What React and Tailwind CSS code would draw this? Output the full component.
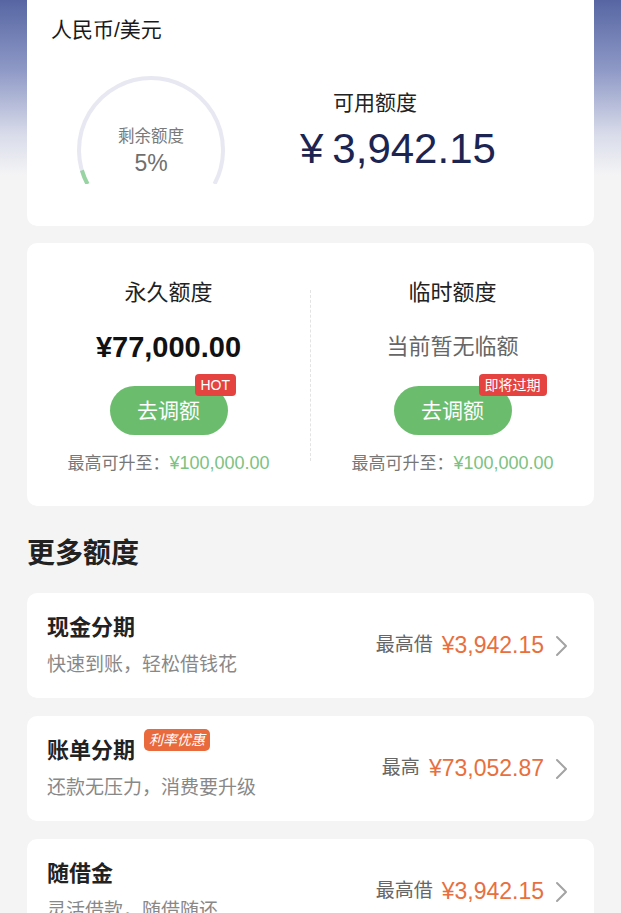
const font = { fontFamily: '"Liberation Sans", "Noto Sans CJK SC", sans-serif' };

function Gauge() {
  const arc = "M 16.5 109 A 72 72 0 1 1 143.5 109";
  return (
    <div className="relative w-[160px] h-[109px] shrink-0">
      <svg width="160" height="109" viewBox="0 0 160 109">
        <path d={arc} fill="none" stroke="#e7e8f1" strokeWidth="4" />
        <path d={arc} fill="none" stroke="#97d4a2" strokeWidth="4" pathLength="100" strokeDasharray="5 100" />
      </svg>
      <div className="absolute inset-0 flex flex-col items-center pt-[50px]">
        <span className="text-[16.5px] leading-[22px] text-[#7a7a7a]">剩余额度</span>
        <span className="text-[23px] leading-[28px] text-[#6f6f6f] mt-[2px]">5%</span>
      </div>
    </div>
  );
}

function Chevron() {
  return (
    <svg width="13" height="22" viewBox="0 0 13 22" className="ml-[11px]">
      <path d="M2 2 L11 11 L2 20" fill="none" stroke="#a3a3a3" strokeWidth="2" strokeLinecap="round" strokeLinejoin="round" />
    </svg>
  );
}

function LimitCol({ title, value, muted, badge }) {
  return (
    <div className="flex-1 flex flex-col items-center">
      <p className="text-[22px] leading-[26px] text-[#222]">{title}</p>
      {muted ? (
        <p className="mt-[24px] text-[22px] leading-[34px] text-[#666]">{value}</p>
      ) : (
        <p className="mt-[24px] text-[29px] leading-[34px] font-semibold text-[#111]">{value}</p>
      )}
      <div className="relative mt-[22px]">
        <button className="w-[118px] h-[49px] rounded-full bg-[#6bbd6d] text-white text-[21px]">去调额</button>
        <span className="absolute -top-[12px] left-[85px] h-[22px] px-[6px] rounded-[4px] bg-[#e5433f] text-white text-[14px] leading-[22px] whitespace-nowrap">
          {badge}
        </span>
      </div>
      <p className="mt-[17px] text-[17px] leading-[22px] text-[#777] whitespace-nowrap">
        最高可升至：<span className="text-[18px] text-[#7cc281]">¥100,000.00</span>
      </p>
    </div>
  );
}

function ProductCard({ title, desc, label, amount, tag }) {
  return (
    <div className="flex items-center justify-between h-[105px] rounded-[10px] bg-white pl-[20px] pr-[26px]">
      <div className="flex flex-col">
        <div className="flex items-start">
          <p className="text-[22px] leading-[26px] font-semibold text-[#222]">{title}</p>
          {tag && (
            <span className="ml-[9px] -mt-[9px] h-[22px] px-[5px] rounded-[5px] bg-[#e96a3c] text-white text-[14px] leading-[22px] italic">
              {tag}
            </span>
          )}
        </div>
        <p className="mt-[12px] text-[19px] leading-[24px] text-[#888]">{desc}</p>
      </div>
      <div className="flex items-center">
        <span className="text-[19px] text-[#666]">{label}</span>
        <span className="ml-[9px] text-[23px] text-[#e86f3e]">{amount}</span>
        <Chevron />
      </div>
    </div>
  );
}

export default function App() {
  return (
    <div
      style={font}
      className="min-h-[913px] overflow-hidden bg-[linear-gradient(180deg,#5766a3_0px,#8e99c6_70px,#d9dcea_135px,#f4f4f5_175px,#f4f4f5_100%)] px-[27px] pb-[40px]"
    >
      <div className="-mt-[12px] rounded-[10px] bg-white pt-[29px] pb-[42px] pl-[24px]">
        <p className="text-[21px] leading-[26px] text-[#1a1a1a]">人民币/美元</p>
        <div className="mt-[32px] flex items-start">
          <div className="ml-[20px]">
            <Gauge />
          </div>
          <div className="ml-[69px] mt-[14px] flex flex-col">
            <p className="ml-[33px] text-[21px] leading-[28px] text-[#222]">可用额度</p>
            <p className="mt-[8px] text-[42px] leading-[48px] text-[#1c2552]">
              ¥<span className="ml-[9px]">3,942.15</span>
            </p>
          </div>
        </div>
      </div>

      <div className="mt-[17px] flex rounded-[10px] bg-white pt-[37px] pb-[31px]">
        <LimitCol title="永久额度" value="¥77,000.00" badge="HOT" />
        <div className="mt-[10px] mb-[14px] border-l border-dashed border-[#e3e3e3]" />
        <LimitCol title="临时额度" value="当前暂无临额" muted badge="即将过期" />
      </div>

      <h2 className="mt-[31px] text-[28px] leading-[34px] font-bold text-[#222]">更多额度</h2>

      <div className="mt-[22px] flex flex-col gap-[18px]">
        <ProductCard title="现金分期" desc="快速到账，轻松借钱花" label="最高借" amount="¥3,942.15" />
        <ProductCard title="账单分期" desc="还款无压力，消费要升级" label="最高" amount="¥73,052.87" tag="利率优惠" />
        <ProductCard title="随借金" desc="灵活借款，随借随还" label="最高借" amount="¥3,942.15" />
      </div>
    </div>
  );
}
